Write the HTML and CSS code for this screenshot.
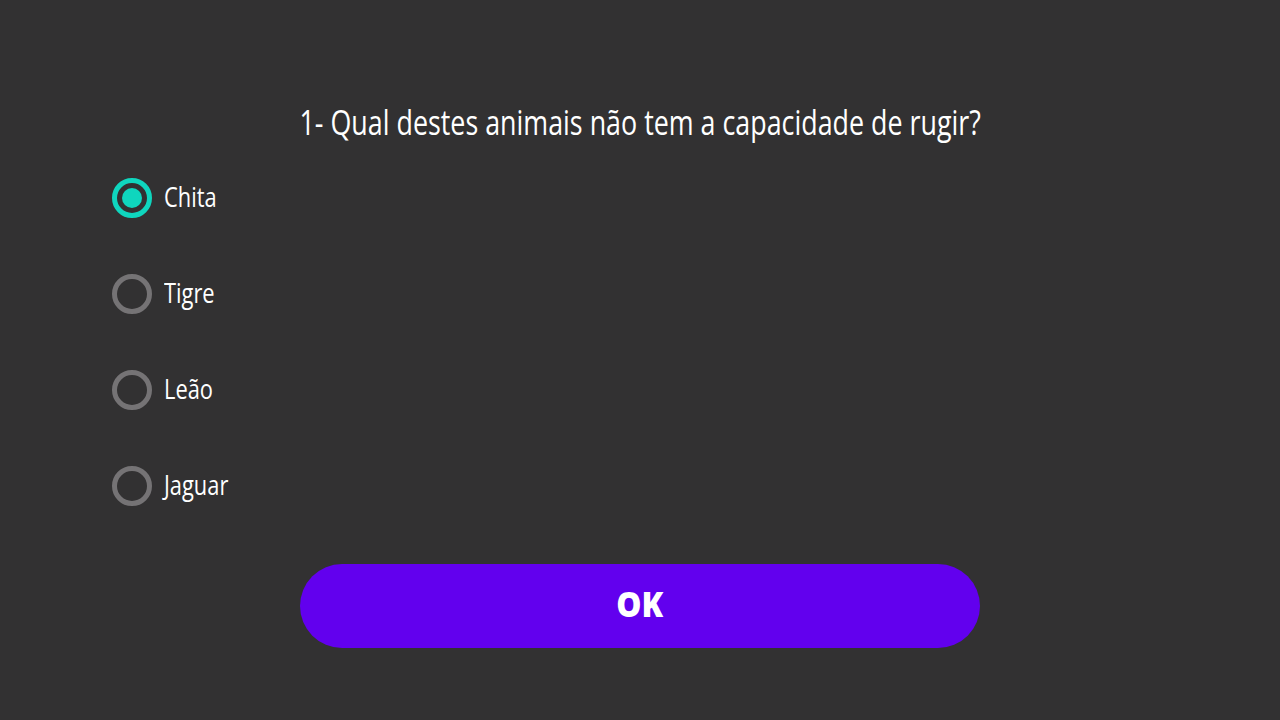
FILE: index.html
```html
<!DOCTYPE html>
<html lang="pt">

<head>
    <meta charset="UTF-8" />
    <meta name="viewport" content="width=device-width, initial-scale=1.0" />
    <title>Quiz</title>
    <link rel="stylesheet" href="styles.css">
</head>

<body>
    <div class="quiz">
        <h1 class="question"><span class="question-text">1- Qual destes animais não tem a capacidade de rugir?</span></h1>
        <ul class="options">
            <li class="option"><span class="radio checked"></span><span class="label">Chita</span></li>
            <li class="option"><span class="radio"></span><span class="label">Tigre</span></li>
            <li class="option"><span class="radio"></span><span class="label">Leão</span></li>
            <li class="option"><span class="radio"></span><span class="label">Jaguar</span></li>
        </ul>
        <button class="ok"><span class="ok-text">OK</span></button>
    </div>
</body>

</html>
```

FILE: styles.css
```css
* {
    box-sizing: border-box;
}

body {
    margin: 0;
    background: #323132;
    font-family: "Open Sans", "Liberation Sans", sans-serif;
    color: #fff;
}

.quiz {
    width: 1280px;
    height: 720px;
    padding: 100px 112px 0;
    display: flex;
    flex-direction: column;
    overflow: hidden;
}

.question {
    margin: 0;
    height: 44px;
    line-height: 44px;
    text-align: center;
    font-size: 35px;
    font-weight: 400;
    white-space: nowrap;
}

.question-text {
    display: inline-block;
    transform: scaleX(0.767);
}

.options {
    margin: 6px 0 0;
    padding: 0;
    list-style: none;
    display: flex;
    flex-direction: column;
}

.option {
    height: 96px;
    display: flex;
    align-items: center;
    gap: 12px;
}

.radio {
    width: 40px;
    height: 40px;
    border: 5px solid #757375;
    border-radius: 50%;
    display: flex;
    align-items: center;
    justify-content: center;
}

.radio.checked {
    border-color: #0fd6be;
}

.radio.checked::after {
    content: "";
    width: 20px;
    height: 20px;
    border-radius: 50%;
    background: #0fd6be;
}

.label {
    font-size: 28px;
    transform: scaleX(0.78);
    transform-origin: left center;
    margin-top: -4px;
}

.ok {
    align-self: center;
    margin-top: 30px;
    width: 680px;
    height: 84px;
    padding: 0 0 6px;
    border: none;
    border-radius: 42px;
    background: #6200ee;
    color: #fff;
    font-family: inherit;
    font-size: 36px;
    font-weight: 800;
}

.ok-text {
    display: inline-block;
    transform: scaleX(0.88);
}
```
